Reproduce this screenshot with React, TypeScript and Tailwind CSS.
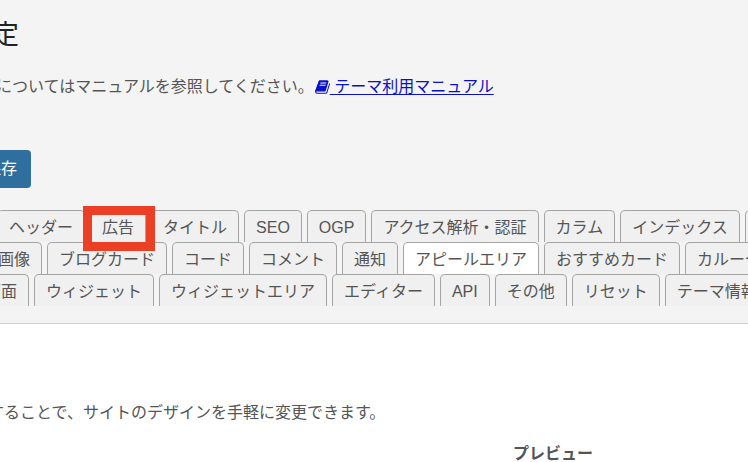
const rows = [
  { offset: "-ml-[3px]", tabs: ["ヘッダー", "広告", "タイトル", "SEO", "OGP", "アクセス解析・認証", "カラム", "インデックス", "目次"] },
  { offset: "-ml-[14px]", tabs: ["画像", "ブログカード", "コード", "コメント", "通知", "アピールエリア", "おすすめカード", "カルーセル"] },
  { offset: "-ml-[27px]", tabs: ["画面", "ウィジェット", "ウィジェットエリア", "エディター", "API", "その他", "リセット", "テーマ情報"] },
]

const BookIcon = () => (
  <svg viewBox="0 0 1664 1792" className="ml-px inline-block h-4 w-[15px] align-[-3px]" fill="currentColor" aria-hidden="true">
    <path d="M1639 478q40 57 18 129l-275 906q-19 64-76.5 107.5t-122.5 43.5h-923q-77 0-148.5-53.5t-99.5-131.5q-24-67-2-127 0-4 3-27t4-37q1-8-3-21.5t-3-19.5q2-11 8-21t16.5-23.5 16.5-23.5q23-38 45-91.5t30-91.5q3-10 .5-30t-.5-28q3-11 17-28t17-23q21-36 42-92t25-90q1-9-2.5-32t.5-28q4-13 22-30.5t22-22.5q19-26 42.5-84.5t27.5-96.5q1-8-3-25.5t-2-26.5q2-8 9-18t18-23 17-21q8-12 16.5-30.5t15-35 16-36 19.5-32 26.5-23.5 36-11.5 47.5 5.5l-1 3q38-9 51-9h761q74 0 114 56t18 130l-274 906q-36 119-71.5 153.5t-128.5 34.5h-869q-27 0-38 15-11 16-1 43 24 70 144 70h923q29 0 56-15.5t35-41.5l300-987q7-22 5-57 38 15 59 43zm-1064 2q-4 13 2 22.5t20 9.5h608q13 0 25.5-9.5t16.5-22.5l21-64q4-13-2-22.5t-20-9.5h-608q-13 0-25.5 9.5t-16.5 22.5zm-83 256q-4 13 2 22.5t20 9.5h608q13 0 25.5-9.5t16.5-22.5l21-64q4-13-2-22.5t-20-9.5h-608q-13 0-25.5 9.5t-16.5 22.5z" />
  </svg>
)

const Tab = ({ label }: { label: string }) => {
  const active = label === "アピールエリア"
  return (
    <li className="relative shrink-0">
      <button
        type="button"
        role="tab"
        aria-selected={active}
        className={`block h-8 rounded-t-[5px] border border-b-0 border-[#a5a5a5] px-[11px] leading-[34px] whitespace-nowrap ${active ? "bg-white" : "bg-[#f0f0f0]"}`}
      >
        {label}
      </button>
      {label === "広告" && (
        <span className="pointer-events-none absolute -top-1 -right-[9px] -bottom-[9px] -left-[7px] z-10 border-[9px] border-[#eb4025]" />
      )}
    </li>
  )
}

const App = () => {
  return (
    <main className="min-h-screen overflow-hidden bg-white font-['Liberation_Sans','Noto_Sans_CJK_JP',sans-serif] text-base leading-6 text-[#555]">
      <header className="border-b border-[#ccc] bg-[#f4f4f4] pt-[17px] pb-[17px]">
        <h1 className="-ml-[35px] text-[27px] leading-9 text-[#1d2327]">設定</h1>
        <p className="mt-[22px] -ml-1 whitespace-nowrap">
          についてはマニュアルを参照してください。
          <a href="#manual" className="text-[#0a10c8]">
            <BookIcon />
            <span className="underline underline-offset-2 [text-decoration-skip-ink:none]">&nbsp;テーマ利用マニュアル</span>
          </a>
        </p>
        <button type="button" className="mt-[51px] -ml-[29px] h-[38px] rounded-r-[4px] bg-[#2f6f9f] px-[14px] text-white">
          保存
        </button>
        <div role="tablist" className="mt-[22px]">
          {rows.map((row) => (
            <ul key={row.offset} role="presentation" className={`flex gap-[5px] ${row.offset}`}>
              {row.tabs.map((tab) => (
                <Tab key={tab} label={tab} />
              ))}
            </ul>
          ))}
        </div>
      </header>
      <section className="pt-[77px]">
        <p className="-ml-3 whitespace-nowrap">することで、サイトのデザインを手軽に変更できます。</p>
        <div className="grid grid-cols-[358px_1fr] pt-[17px]">
          <h2 className="col-start-2 text-center font-bold">プレビュー</h2>
        </div>
      </section>
    </main>
  )
}

export default App
